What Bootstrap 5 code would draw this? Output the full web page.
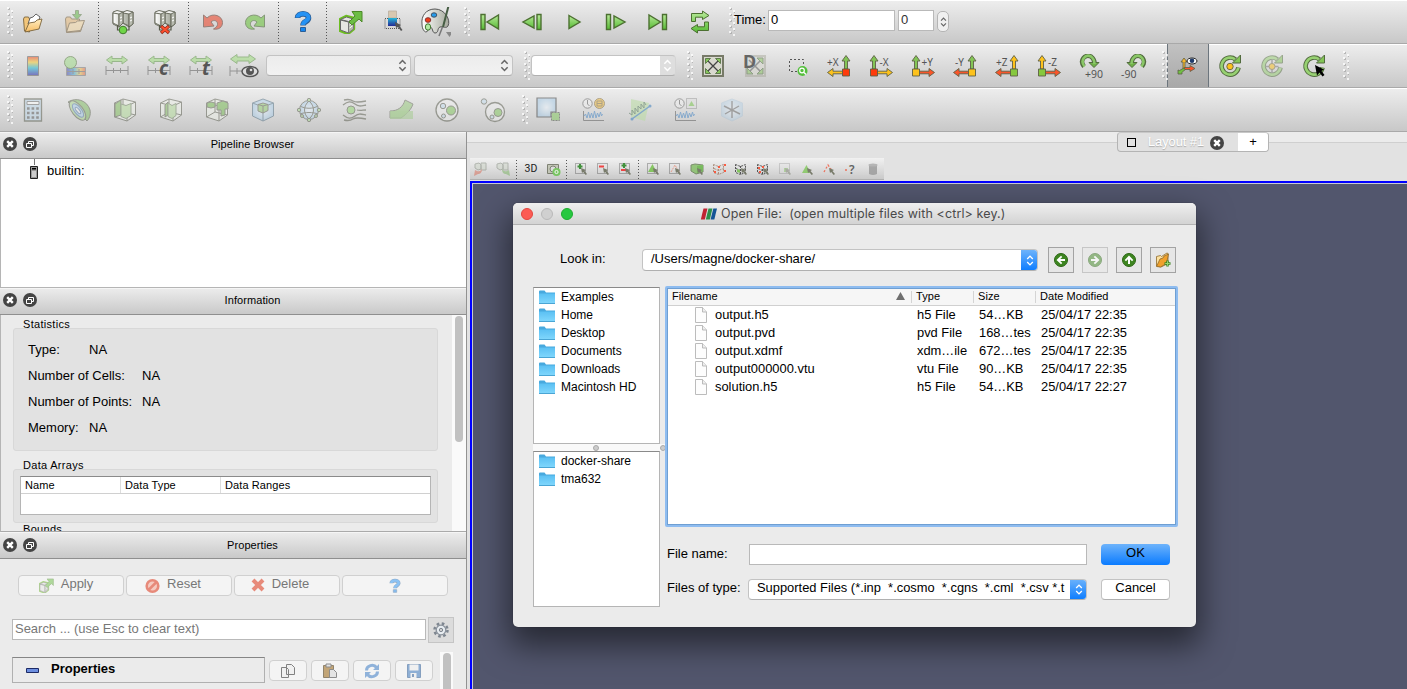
<!DOCTYPE html>
<html lang="en">
<head>
<meta charset="utf-8">
<meta name="viewport" content="width=device-width, initial-scale=1">
<title>ParaView</title>
<link href="https://cdn.jsdelivr.net/npm/bootstrap@5.3.0/dist/css/bootstrap.min.css" rel="stylesheet">
<style>
body{font-family:"Liberation Sans",Arial,sans-serif;font-size:13px;line-height:18px;color:#000;background:#ebebeb;height:689px;overflow:hidden}
svg{display:block;flex:none;overflow:visible}
.tbar{height:44px;background:linear-gradient(#fff 0,#fff 1px,#ededed 1px,#c8c8c8 100%);border-bottom:1px solid #a9a9a9;padding-left:7px}
.tbar .slot{width:42px;height:43px;flex:none;display:flex;align-items:center;justify-content:center;padding-top:1px}
.tbar.wide .slot{width:46px}
.grip{width:6px;height:29px;flex:none;margin-top:-1px;opacity:.75}
.off{opacity:.5}
.vsep{width:6px;flex:none;height:40px;background:repeating-linear-gradient(#555 0,#555 1px,transparent 1px,transparent 3px) 2px 0/1px 100% no-repeat}
.combo{height:21px;border:1px solid #c3c3c3;border-bottom-color:#b0b0b0;border-radius:4px;background:#f1f1f1;display:flex;align-items:center;flex:none}
.combo.gray{background:linear-gradient(#ececec,#f2f2f2)}
.boxin{background:#fff;border:1px solid #b9b9b9;flex:none;height:21px;padding:0 2px;line-height:18px}
.btn-flat{background:#f4f4f4;border:1px solid #d0d0d0;border-radius:4px;height:21px;color:#777;display:flex;align-items:center;justify-content:center;padding:0;font-size:13px;line-height:15px}
.btn-flat span{margin-top:-4px}
.acts .btn-flat{padding-right:4px}
.dock{width:467px;border-right:1px solid #929292;flex:none}
.dtitle{height:27px;background:linear-gradient(#fff 0,#ebebeb 1px,#c9c9c9 100%);border-bottom:1px solid #8f8f8f;font-size:11px;position:relative;flex:none;letter-spacing:.07px;padding-bottom:2px}
.dtitle .ttl{padding-left:39px;width:100%;text-align:center}
.tree{height:129px;background:#fff;border-left:1px solid #b5b5b5;border-bottom:1px solid #b5b5b5;flex:none}
.info{height:217px;border-left:1px solid #b5b5b5;border-bottom:1px solid #aaa;overflow:hidden;flex:none}
.glabel{font-size:11px;line-height:12px;letter-spacing:.3px;padding-left:10px}
.gbox{background:#e2e2e2;border:1px solid #d8d8d8;border-radius:3px}
.srow{height:26px;padding-left:14px;display:flex;align-items:center}
.htab{font-size:11px;letter-spacing:.1px}
.track{width:14px;background:#fafafa;padding:2px 3px 0}
.thumb{width:8px;border-radius:4px;background:#c1c1c1}
.view-tabs{height:26px;background:linear-gradient(#ebebeb 10px,#cfcfcf 10px,#cfcfcf 11px,#e2e2e2 11px)}
.tabpill{margin-left:650px;width:152px;height:20px;border:1px solid #b4b4b4;border-top-color:#c8c8c8;border-radius:4px;background:#e1e1e1;overflow:hidden}
.selbar{width:414px;height:22px;margin-left:3px;background:linear-gradient(#f1f1f1,#cbcbcb);border-bottom:1px solid #b0b0b0}
.selbar .slot{width:22px;flex:none;display:flex;justify-content:center}
.selbar svg{opacity:.8}
.selbar .vsep{height:20px;background-position:2px 1px}
.view{margin-left:3px;margin-top:1px;border-left:2px solid #00f;border-top:2px solid #00f;flex:1;background:#52566d;box-shadow:inset 1px 1px 0 #c8cad2;position:relative}
.dlg{position:absolute;left:41px;top:20px;width:683px;height:424px;background:#ebebeb;border-radius:5px;box-shadow:0 15px 32px 4px rgba(0,0,0,.52),0 0 1px rgba(0,0,0,.6)}
.dlg-h{height:22px;background:linear-gradient(#efefef,#d3d3d3);border-bottom:1px solid #b3b3b3;border-radius:5px 5px 0 0;color:#4a4a4a;position:relative;font-family:Inter,sans-serif}
.light{width:12px;height:12px;border-radius:50%;border:1px solid}
.tool{width:26px;height:26px;border:1px solid #a3a3a3;background:#e6e6e6;padding:0;margin-right:8px;display:flex;align-items:center;justify-content:center;flex:none}
.lst{background:#fff;border:1px solid #b5b5b5;border-top-color:#8a8a8a;height:157px}
.lst>div{height:18px;padding-left:5px;display:flex;align-items:center;gap:6px;font-size:12px;line-height:16px}
.ftab{height:241px;background:#fff;border:2px solid #8ebcf0;box-shadow:inset 0 0 0 1px #6f9fd2;border-radius:2px;padding:1px 1px;margin-left:-1px}
.fr{display:grid;grid-template-columns:243px 62px 62px 1fr;height:18px;line-height:18px;font-size:12.9px}
.fr.h{height:17px;font-size:11px;letter-spacing:.05px;line-height:15px;background:#f6f6f6;border-bottom:1px solid #d0d0d0}
.fr.h span{border-left:1px solid #d4d4d4;padding-left:4px;margin:2px 0;line-height:11px}
.fr>span{padding-left:6px;white-space:nowrap}
.fr .nm{display:flex;gap:8px;padding-left:27px}
.fr .nm svg{margin-top:1px}
.blue{background:linear-gradient(#6db3fb,#0a7bff);width:17px;height:21px;display:flex;align-items:center;justify-content:center}
.ax-x{--u:#83c556;--q:#ff3c0c;--s:#fdc21c}.ax-y{--u:#83c556;--q:#fdc21c;--s:#f9552a}.ax-z{--u:#fdc21c;--q:#86c83e;--s:#f9552a}
svg text{font-family:"Noto Sans","Open Sans",sans-serif}
</style>
</head>
<body class="d-flex flex-column">
<svg width="0" height="0" class="position-absolute" aria-hidden="true"><defs>
<linearGradient id="gr" x2="0" y2="1"><stop stop-color="#b9ea9a"/><stop offset="1" stop-color="#55bb33"/></linearGradient>
<linearGradient id="fo" x2="0" y2="1"><stop stop-color="#ffeec4"/><stop offset="1" stop-color="#f7bd62"/></linearGradient>
<linearGradient id="rb" x2="0" y2="1"><stop stop-color="#ea5a42"/><stop offset=".3" stop-color="#f4cf4c"/><stop offset=".6" stop-color="#3fc0d8"/><stop offset="1" stop-color="#4a3fb0"/></linearGradient>
<linearGradient id="rbh"><stop stop-color="#4a3fb0"/><stop offset=".4" stop-color="#3fb0e0"/><stop offset=".7" stop-color="#f4cf4c"/><stop offset="1" stop-color="#ea5a42"/></linearGradient>
<linearGradient id="cm" x2="0" y2="1"><stop stop-color="#25b6d8"/><stop offset="1" stop-color="#232a95"/></linearGradient>
<linearGradient id="qb" x2="0" y2="1"><stop stop-color="#5cc0ff"/><stop offset="1" stop-color="#0d6fe0"/></linearGradient>
<linearGradient id="sv"><stop stop-color="#fff"/><stop offset="1" stop-color="#a5a99c"/></linearGradient>
<linearGradient id="fold" x2="0" y2="1"><stop stop-color="#5bc0f3"/><stop offset="1" stop-color="#7fd6fc"/></linearGradient>
<radialGradient id="bl"><stop stop-color="#eef6ff"/><stop offset="1" stop-color="#a5cbe8"/></radialGradient>
<symbol id="grip" viewBox="0 0 6 29"><g fill="#a9a9a9"><path d="M1 1h2v2H1zM1 7h2v2H1zM1 13h2v2H1zM1 19h2v2H1zM1 25h2v2H1zM5 4h2v2H5zM5 10h2v2H5zM5 16h2v2H5zM5 22h2v2H5zM5 28h2v2H5z"/></g><path fill="#fff" d="M0 0h2v2H0zM0 6h2v2H0zM0 12h2v2H0zM0 18h2v2H0zM0 24h2v2H0zM4 3h2v2H4zM4 9h2v2H4zM4 15h2v2H4zM4 21h2v2H4zM4 27h2v2H4z"/></symbol>
<symbol id="open" viewBox="0 0 24 24"><g stroke="#7b643c" stroke-linejoin="round" stroke-width=".9"><path fill="#f3c67a" d="M2.500 9l1-2h4l1 2v13l-5-1z"/><path fill="#fff" stroke="#555" d="M7 14l2-6 3-1 3-3 4 3-2 5z"/><path fill="url(#fo)" d="M4 22l4-9 6-1 2-2 5-1-3 10z"/></g></symbol>
<symbol id="save" viewBox="0 0 24 24"><path fill="#e9b872" stroke="#6b5430" d="M2.500 9l1-2h4l1 2h8v4l4-.5-3 9-14 1z"/><path fill="#fbdca4" stroke="#6b5430" d="M3.500 22l3-9 6-.5 2-1.500 7-.5-4 10z"/><path fill="#58b43a" stroke="#5a7a44" d="M12.500.5h3v4h3l-4.500 5-4.500-5h3z"/></symbol>
<symbol id="srv" viewBox="0 0 24 24"><g stroke="#6a6d5f" stroke-width="1" stroke-linejoin="round"><path fill="#f4f4f2" d="M2 2l4-1.500L12 2v11l-4 4-6-3zM12 2l4-1.500L22 2v12l-4 3-6-4z"/><path fill="url(#sv)" d="M2 3l6 1v12l-6-3zM12 3l6 1v12l-6-3z"/><path fill="#b8bbb0" d="M8 4l4-2v11l-4 4zM18 4l4-2v12l-4 3z"/></g><path stroke="#fff" d="M9 8l2-1M9 11l2-1M19 8l2-1M19 11l2-1"/><path fill="none" stroke="#56594a" stroke-width="1.200" d="M6.500 15v5H9m6 0h3v-4"/></symbol>
<symbol id="undo" viewBox="0 0 24 24"><path fill="#e8604a" stroke="#7b5a50" d="M2.500 5v12l10.500-1-3-4c3-3 7-1 6.500 2.500-.2 2-1.500 3-4 4.500 5.500 1 9-2 9-6.500C21.500 6 12 2 6 8z"/></symbol>
<symbol id="redo" viewBox="0 0 24 24"><path fill="#80c75a" stroke="#617a50" d="M21.500 5v12l-10.500-1 3-4c-3-3-7-1-6.500 2.500.2 2 1.500 3 4 4.500-5.500 1-9-2-9-6.500C2.500 6 12 2 18 8z"/></symbol>
<symbol id="help" viewBox="0 0 24 24"><path fill="none" stroke="#2c5f96" stroke-width="5.600" d="M6.500 8c0-5.500 11-5.500 11 0 0 4-5.500 3-5.500 7.500"/><path fill="none" stroke="#2592f4" stroke-width="4" d="M6.500 7.500c0-5 11-5 11 0 0 4-5.500 3-5.500 7.500"/><path fill="#1686ee" stroke="#2c5f96" d="M9.500 17.500h5v4h-5z"/></symbol>
<symbol id="cubearrow" viewBox="0 0 24 24"><path fill="#eee" stroke="#6cbd21" stroke-width="2.400" stroke-linejoin="round" d="M1 9l6-3 8 2v11l-6 5-8-3z"/><path fill="#e6e6e2" stroke="#666" d="M1.500 9.500l6-2.500 7 2-5 2.500zM9.500 12v11l-8-3V10z"/><path fill="#b4b7ac" stroke="#777" d="M9.500 11.500l5-2.500v10l-5 4z"/><path stroke="#fff" d="M10.500 15l3-2m-3 5l3-2"/><path fill="#6cbd45" stroke="#4c8828" d="M13 1.500h10V12l-3-3-7 6-3-3 6-6z"/></symbol>
<symbol id="cmapsel" viewBox="0 0 24 24"><path fill="#d8c8b0" stroke="#b9ad9f" stroke-width=".8" d="M7.500 1h8v7h-8z"/><path fill="none" stroke="#555" stroke-dasharray="1 1" d="M4 8.500h15v10H4z"/><path fill="url(#cm)" d="M7 8h9v8H7z"/><path fill="#555" d="M14 12l6 3-1.500 1 3 4-1.500 1-3-4-2 1z"/></symbol>
<symbol id="palette" viewBox="0 0 30 30"><path fill="url(#sv)" stroke="#555" d="M14 2C5 2 0 9 1 17c0 6 3 8 4 8 3 0 1-5 4-5s2 6 5 6c4 0 2-5 5-6s6 2 8-1c3-6-3-17-13-17z"/><ellipse cx="13" cy="8" rx="2.800" ry="2.200" fill="#259bea" stroke="#456"/><ellipse cx="7" cy="13" rx="2.800" ry="2.300" fill="#f13c17" stroke="#833"/><ellipse cx="7" cy="20" rx="2.700" ry="3.200" fill="#b4eaa4" stroke="#473"/><path stroke="#465d43" stroke-width="2" d="M27.500 -1L22 20"/><path stroke="#777" stroke-width="1.500" d="M21.500 20L18 29"/><path fill="#888" d="M25 25h7l-3.500 5z"/></symbol>
<symbol id="rng" viewBox="0 0 24 24"><path fill="#97dc74" stroke="#55913b" d="M1.500 6L7 2v2.500h10V2l5.500 4L17 10V7.500H7V10z"/><path fill="none" stroke="#555" d="M1 12v9M23 12v9M1 16.500h22M8.500 14v5M15.500 14v5"/></symbol>
<symbol id="ud" viewBox="0 0 10 14"><path fill="none" stroke-width="1.700" d="M1.500 5L5 1.500 8.500 5M1.500 9L5 12.500 8.500 9"/></symbol>
<symbol id="cube" viewBox="0 0 24 24"><path fill="#eef2e9" stroke="#56594a" stroke-linejoin="round" d="M1.500 5L10 1l12.500 3v13L14 23 1.500 19z"/><path fill="none" stroke="#56594a" d="M1.500 5L14 8l8.500-4M14 8v15M10 1v13l12.500 3M10 14l-8.500 5"/></symbol>
<symbol id="ax" viewBox="0 0 24 24"><g stroke="#5e6045" stroke-width=".9"><path fill="var(--s)" d="M23.500 18.500L18 14.500v2.700H8v2.600h10v2.700z"/><path fill="var(--u)" d="M5 1.500L9 7H6.500v8h-3V7H1z"/><path fill="var(--q)" d="M1.500 15h7v7h-7z"/></g></symbol>
<symbol id="rot" viewBox="0 0 24 24"><path fill="none" stroke="#526b3e" stroke-width="4.600" d="M17.500 5.500a8.500 8.500 0 1 0 3 8"/><path fill="#83c556" stroke="#526b3e" d="M14.500 9h8V1z"/><path fill="none" stroke="#97d172" stroke-width="2.600" d="M17 5.200a8.500 8.500 0 1 0 3.400 8.600"/></symbol>
<symbol id="rot9" viewBox="0 0 24 24"><path fill="none" stroke="#526b3e" stroke-width="4.400" d="M5 12.500c-5-6 1-13 7-10 2 1.500 3.500 3 3.500 6.500"/><path fill="#70b248" stroke="#526b3e" d="M10 8.500h10l-5 5z"/><path fill="none" stroke="#8ac767" stroke-width="2.600" d="M5.500 12.500c-5-6 1-13 6.500-10 2 1.500 3.500 3 3.500 7.500"/></symbol>
<symbol id="wave" viewBox="0 0 24 24"><path fill="none" stroke="#555" d="M1.500 13v9.500H22"/><path fill="none" stroke="#3a80c5" d="M2 18l1.500-2 1.500 4 1.500-6 1.500 6 1.500-5 1.500 5 1.500-7 1.500 7 1.500-5 1.500 4 1.500-5 1 4 1-2"/></symbol>
<symbol id="clk" viewBox="0 0 24 24"><circle cx="5.500" cy="5.500" r="4.700" fill="#eee" stroke="#555"/><path fill="none" stroke="#555" d="M5.500 2v4l2 2"/></symbol>
<symbol id="dx" viewBox="0 0 14 14"><circle cx="7" cy="7" r="7" fill="#444"/><path stroke="#fff" stroke-width="2.400" d="M4.200 4.200l5.600 5.600m0-5.600L4.200 9.800"/></symbol>
<symbol id="df" viewBox="0 0 14 14"><circle cx="7" cy="7" r="7" fill="#444"/><path fill="none" stroke="#fff" d="M3.500 6.500h5v4h-5zM5.500 6V4.500h5v4H9"/></symbol>
<symbol id="selbox" viewBox="0 0 16 16"><path fill="none" stroke="#555" stroke-dasharray="1 1" d="M2.500 2.500h10v10h-10z"/></symbol>
<symbol id="cur" viewBox="0 0 16 16"><path fill="#60644f" d="M8 7l5 2-1.500 1 2.500 3-1.300 1-2.500-3-1.200 1z"/></symbol>
<symbol id="net" viewBox="0 0 16 16"><path fill="none" d="M2.500 3.500l5 2 5-2v8l-5 2-5-2zM7.500 5v8M3 7.500l4.500 2 5-2" stroke-dasharray="2 1"/></symbol>
<symbol id="lnk" viewBox="0 0 16 16"><path fill="#c7d1c0" stroke="#667060" d="M2 3l4-1 2 2v4L5 9 2 7zM8 2h5v7H8z"/></symbol>
<symbol id="folder" viewBox="0 0 16 14"><path fill="#48a9de" d="M0 1.500Q0 .5 1 .5h4.500l1.500 2h9V13H0z"/><path fill="url(#fold)" d="M0 3.500h16V13H0z"/><path fill="#4aa5d4" d="M0 13h16v1H0z"/></symbol>
<symbol id="doc" viewBox="0 0 12 16"><path fill="#fdfdfd" stroke="#b4b4b4" stroke-width=".9" d="M.5.5h7l4 4.500v10.500H.5z"/><path fill="#eee" stroke="#b4b4b4" stroke-width=".9" d="M7.500.5V5h4"/></symbol>
<symbol id="arw" viewBox="0 0 16 16"><circle cx="8" cy="8" r="6.500" fill="#3d8520" stroke="#2c6614"/><path fill="#fff" d="M3.500 8L8 3.700l1.300 1.300L7.200 7H12v2H7.200l2.100 2L8 12.300z"/></symbol>
<symbol id="ball" viewBox="0 0 24 24"><path fill="none" stroke="#56594a" d="M3 8c5 3 13 3 18 0M3 16c5-2 13-2 18 0M12 3c-6 5-6 13 0 18M12 3c6 5 6 13 0 18"/><circle cx="12" cy="12" r="9.500" fill="none" stroke="#56594a"/><g fill="#a3d68b" stroke="#56594a"><circle cx="12" cy="2" r="1.700"/><circle cx="12" cy="22" r="1.700"/><circle cx="2" cy="12" r="1.700"/><circle cx="22" cy="12" r="1.700"/><circle cx="5" cy="18" r="1.500"/><circle cx="19" cy="18" r="1.500"/></g></symbol>
</defs></svg>

<!-- main toolbar -->
<div class="tbar d-flex align-items-center">
<svg class="grip" style="margin-right:-1px"><use href="#grip"/></svg>
<div class="slot"><svg width="24" height="24"><use href="#open"/></svg></div>
<div class="slot off"><svg width="24" height="24"><use href="#save"/></svg></div>
<div class="vsep"></div>
<div class="slot"><svg width="24" height="24"><use href="#srv"/><circle cx="12" cy="20" r="3.800" fill="#6fd548" stroke="#417b2b"/></svg></div>
<div class="slot"><svg width="24" height="24"><use href="#srv"/><path stroke="#8c2c1c" stroke-width="3.400" d="M8 16l8 7m0-7l-8 7"/><path stroke="#ff4f2e" stroke-width="2" d="M8.500 16.500l7 6m0-6l-7 6"/></svg></div>
<div class="vsep"></div>
<div class="slot" style="opacity:.7"><svg width="24" height="24"><use href="#undo"/></svg></div>
<div class="slot" style="opacity:.7"><svg width="24" height="24"><use href="#redo"/></svg></div>
<div class="vsep"></div>
<div class="slot"><svg width="24" height="24"><use href="#help"/></svg></div>
<div class="vsep"></div>
<div class="slot"><svg width="24" height="24"><use href="#cubearrow"/></svg></div>
<div class="slot"><svg width="24" height="24"><use href="#cmapsel"/></svg></div>
<div class="slot" style="width:44px"><svg width="30" height="30"><use href="#palette"/></svg></div>
<svg class="grip" style="margin:0 -1px 0 6px"><use href="#grip"/></svg>
<div class="slot"><svg width="24" height="24" fill="url(#gr)" stroke="#4c7031" stroke-width="1.400"><path d="M3 4.500h4v15H3zM20.500 5v14L9 12z"/></svg></div>
<div class="slot"><svg width="24" height="24" fill="url(#gr)" stroke="#4c7031" stroke-width="1.400"><path d="M17 4.500h4v15h-4zM14 6v12L3 12z"/></svg></div>
<div class="slot"><svg width="24" height="24" fill="url(#gr)" stroke="#4c7031" stroke-width="1.400"><path d="M7 5.500l11 6.500-11 6.500z"/></svg></div>
<div class="slot"><svg width="24" height="24" fill="url(#gr)" stroke="#4c7031" stroke-width="1.400"><path d="M2.500 4.500h4v15h-4zM10 6v12l11-6z"/></svg></div>
<div class="slot"><svg width="24" height="24" fill="url(#gr)" stroke="#4c7031" stroke-width="1.400"><path d="M16.500 4.500h4v15h-4zM3 5v14l11.500-7z"/></svg></div>
<div class="slot"><svg width="24" height="24" fill="url(#gr)" stroke="#4c7031"><path d="M3.500 11.500v-8h11V1l6.500 4.500-6.500 4V7.200H7.500v4.300zM20.500 12v8.500h-11V23L3 18.500l6.500-4v2.300h7V12z"/></svg></div>
<svg class="grip" style="margin:0 1px 0 8px"><use href="#grip"/></svg>
<span style="width:34px;margin:-3px 0 0 -2px;font-size:13px;letter-spacing:-.05px">Time:</span>
<div class="boxin" style="width:127px;margin:-3px 3px 0 0">0</div>
<div class="boxin" style="width:36px;margin:-2px 3px 0 0;color:#333">0</div>
<div class="d-flex align-items-center justify-content-center" style="width:12px;height:21px;border:1px solid #b5b5b5;border-radius:5px;background:#f0f0f0"><svg width="7" height="14" stroke="#666"><use href="#ud"/></svg></div>
</div>

<!-- colouring and camera toolbar -->
<div class="tbar d-flex align-items-center">
<svg class="grip" style="margin-right:-1px"><use href="#grip"/></svg>
<div class="slot" style="opacity:.65"><svg width="24" height="24"><path fill="url(#rb)" stroke="#777" d="M6.500 2.500h11v19h-11z"/></svg></div>
<div class="slot off"><svg width="24" height="24"><path fill="url(#rbh)" stroke="#777" d="M3.500 13.500h19v8h-19z"/><path stroke="#666" fill="none" d="M4 17.500h18M10 15v5M16 15v5"/><circle cx="7.500" cy="8.500" r="6" fill="#9cdc84" stroke="#4c7031"/></svg></div>
<div class="slot off"><svg width="24" height="24"><use href="#rng"/></svg></div>
<div class="slot"><svg width="24" height="24"><g class="off"><use href="#rng"/></g><text x="12" y="21" font-size="19" font-weight="700" font-style="italic" fill="#555">c</text></svg></div>
<div class="slot"><svg width="24" height="24"><g class="off"><use href="#rng"/></g><text x="13" y="21" font-size="19" font-weight="700" font-style="italic" fill="#555">t</text></svg></div>
<div class="slot" style="width:44px"><svg width="30" height="24"><g class="off"><path fill="#97dc74" stroke="#55913b" d="M1.500 5L8 .5V3h12V.5L26.500 5 20 9.500V7H8v2.500z"/><path stroke="#555" fill="none" d="M1 12v10M1 17h12M8 14v6"/></g><ellipse cx="21" cy="17.500" rx="8" ry="5" fill="#ddd" stroke="#555" stroke-width="1.500"/><circle cx="21" cy="17" r="4" fill="#555"/><circle cx="22" cy="16" r="1.300" fill="#ddd"/></svg></div>
<div class="combo gray justify-content-end" style="width:145px;margin-right:3px;padding-right:3px"><svg width="9" height="13" stroke="#666"><use href="#ud"/></svg></div>
<div class="combo gray justify-content-end" style="width:99px;margin-right:11px;padding-right:3px"><svg width="9" height="13" stroke="#666"><use href="#ud"/></svg></div>
<svg class="grip" style="margin-right:1px"><use href="#grip"/></svg>
<div class="combo overflow-hidden" style="width:145px;margin-right:11px;border-right-color:#d5d5d5;background:linear-gradient(90deg,#fff 128px,#dedede 128px)"><svg width="9" height="13" stroke="#fff" style="margin-left:131px"><use href="#ud"/></svg></div>
<svg class="grip" style="margin-right:-1px"><use href="#grip"/></svg>
<div class="slot"><svg width="24" height="24"><path fill="#d9d9cf" stroke="#777a68" stroke-width="2" d="M2 2h20v20H2z"/><path stroke="#444" stroke-width="1.300" d="M6 6l12 12M18 6L6 18"/><path fill="#86c65b" stroke="#4b663b" stroke-width=".8" d="M4.500 4.500h5l-5 5zM19.500 4.500v5l-5-5zM4.500 19.500v-5l5 5zM19.500 19.500h-5l5-5z"/></svg></div>
<div class="slot"><svg width="24" height="24"><g class="off"><path fill="#d9d9cf" stroke="#a9a99c" stroke-width="2" d="M3 2h19v20H3z"/><path stroke="#555" stroke-width="1.500" d="M6 6l12 12M18 6L6 18"/><path fill="#86c65b" stroke="#4b663b" d="M20 4v6l-6-6zM4 20v-6l6 6zM20 20h-6l6-6z"/></g><text x="0" y="14" font-size="18" font-weight="700" fill="#666">D</text></svg></div>
<div class="slot"><svg width="24" height="24"><path fill="none" stroke="#555" stroke-dasharray="2 2" d="M12 17.500H4.500v-12h14V12"/><circle cx="17.500" cy="17" r="5" fill="#54bf3c"/><circle cx="17" cy="16.500" r="2.300" fill="none" stroke="#fff" stroke-width="1.200"/><path stroke="#fff" stroke-width="1.500" d="M19 18.500l2 2"/></svg></div>
<div class="slot ax-x"><svg width="24" height="24"><g transform="matrix(-1 0 0 1 24 0)"><use href="#ax" width="24" height="24"/></g><text x="0" y="12" font-size="10" fill="#555">+X</text></svg></div>
<div class="slot ax-x"><svg width="24" height="24"><use href="#ax"/><text x="10.500" y="12" font-size="10" fill="#555">-X</text></svg></div>
<div class="slot ax-y"><svg width="24" height="24"><use href="#ax"/><text x="10.500" y="12" font-size="10" fill="#555">+Y</text></svg></div>
<div class="slot ax-y"><svg width="24" height="24"><g transform="matrix(-1 0 0 1 24 0)"><use href="#ax" width="24" height="24"/></g><text x="2" y="12" font-size="10" fill="#555">-Y</text></svg></div>
<div class="slot ax-z"><svg width="24" height="24"><g transform="matrix(-1 0 0 1 24 0)"><use href="#ax" width="24" height="24"/></g><text x="1" y="12" font-size="10" fill="#555">+Z</text></svg></div>
<div class="slot ax-z"><svg width="24" height="24"><use href="#ax"/><text x="11" y="12" font-size="10" fill="#555">-Z</text></svg></div>
<div class="slot"><svg width="24" height="24"><use href="#rot9"/><text x="6" y="24" font-size="10.500" fill="#555">+90</text></svg></div>
<div class="slot"><svg width="24" height="24"><g transform="matrix(-1 0 0 1 26 0)"><use href="#rot9" width="24" height="24"/></g><text x="0" y="24" font-size="10.500" fill="#555">-90</text></svg></div>
<svg class="grip" style="margin:0 -1px 0 8px"><use href="#grip"/></svg>
<div class="slot border-start border-end border-secondary" style="background:linear-gradient(#c2c2c2,#a8a8a8)"><svg width="24" height="24"><g stroke="#5e6045" stroke-width=".8"><path fill="#f7b82d" d="M8 4l3 4H9v8H7V8H5z"/><path fill="#f9552a" d="M19 14.500l-5-3v2H8v2h6v2z"/><path fill="#70c043" d="M8 14l1 1.500-3 3V20H2v-4l1.500.5z"/></g><ellipse cx="16" cy="7" rx="5" ry="3" fill="#fff" stroke="#222"/><circle cx="16" cy="6.800" r="2.300" fill="#203c6c"/></svg></div>
<div class="slot"><svg width="24" height="24"><use href="#rot"/><circle cx="12" cy="12.500" r="3.200" fill="#fdc21c" stroke="#746c44"/></svg></div>
<div class="slot off"><svg width="24" height="24"><use href="#rot"/><path stroke="#777" stroke-width="1.500" d="M12 6v13M5.500 12.500h13"/><circle cx="12" cy="12.500" r="3" fill="#fdc21c" stroke="#746c44"/></svg></div>
<div class="slot"><svg width="24" height="24"><use href="#rot"/><path d="M13 11l9 4.500-2.500 1.500 3 4-2 1.500-3-4-2.500 3z"/></svg></div>
<svg class="grip" style="margin-left:8px"><use href="#grip"/></svg>
</div>

<!-- filter toolbar -->
<div class="tbar wide d-flex align-items-center">
<svg class="grip" style="margin-right:-3px"><use href="#grip"/></svg>
<div class="slot off"><svg width="24" height="24"><path fill="#bcd7ea" stroke="#56594a" stroke-width="1.300" d="M3.500 1h17v22h-17z"/><path fill="#fff" stroke="#666" d="M6 3.500h12v3H6z"/><path stroke="#555" stroke-width="2.600" stroke-dasharray="2.600 2" fill="none" d="M6 10.500h12.500M6 15h12.500M6 19.500h12.500"/></svg></div>
<div class="slot off"><svg width="24" height="24"><path fill="#7dbb5f" stroke="#56594a" d="M1 4c8-5 19-2 22 8 1 5-1 9-3 11z"/><ellipse cx="10.500" cy="12.500" rx="5.500" ry="11.500" transform="rotate(-38 10.500 12.500)" fill="#a9d58c" stroke="#56594a"/><ellipse cx="11" cy="12.500" rx="3.500" ry="8" transform="rotate(-38 11 12.500)" fill="#a5cbe8" stroke="#4f77a5"/><ellipse cx="11" cy="12.500" rx="1.500" ry="4" transform="rotate(-38 11 12.500)" fill="#eee" stroke="#4f77a5"/></svg></div>
<div class="slot off"><svg width="24" height="24"><use href="#cube"/><path fill="#7dbd58" stroke="#56594a" d="M2 6l6-4v15l-6 2z"/><path fill="#b3dd98" stroke="#6d805f" d="M8 6l5 1.500 5-2v12l-5 3-5-2z"/></svg></div>
<div class="slot off"><svg width="24" height="24"><use href="#cube"/><path fill="#7dbd58" stroke="#56594a" d="M6 7l3-3v13l-3 2z"/><path fill="#b3dd98" stroke="#6d805f" d="M9 5l4 2.500 4-2v12l-4 3-4-2z"/></svg></div>
<div class="slot off"><svg width="24" height="24"><use href="#cube"/><path fill="#70b74b" stroke="#56594a" d="M2 5l4-1 4 1v4L6 10 2 9zM12 5l6-2 5 2v6h-3v6l-4 1v-6h-4z"/></svg></div>
<div class="slot off"><svg width="24" height="24"><path fill="url(#bl)" stroke="#4f6d80" d="M1.500 5L12 1l10.500 4v13L12 23 1.500 18z"/><path fill="none" stroke="#4f6d80" d="M1.500 5L12 9l10.500-4M12 9v14"/><path fill="#8dcb6a" stroke="#56594a" d="M7 6.500L12 5l5 1.500v6L12 15l-5-2z"/><path fill="none" stroke="#56594a" d="M7 6.500l5 1.500 5-1.500M12 8v7"/></svg></div>
<div class="slot off"><svg width="24" height="24"><circle cx="12" cy="12" r="9.500" fill="url(#bl)"/><use href="#ball"/></svg></div>
<div class="slot off"><svg width="24" height="24"><path fill="none" stroke="#56594a" stroke-width="1.300" d="M1 2c4-1 6-1 9 1s8 1 13 0M0 7c5-4 8-4 12-1s6 2 11 1M14 12c3 1 6 0 9 0M0 17c5 4 8 4 12 1s6-2 11-1M1 22c4 1 6 1 9-1s8-1 13 0"/><circle cx="8" cy="12" r="4" fill="#8ed56c" stroke="#56594a"/></svg></div>
<div class="slot off"><svg width="24" height="24"><path fill="#8cc76c" stroke="#56594a" d="M1 13c8 0 13-4 15-11l8 4c-2 6-6 9-8 11l-4 3H1z" opacity=".9"/><path fill="#8cc76c" opacity=".7" d="M1 13h23v8H1z"/></svg></div>
<div class="slot off"><svg width="24" height="24"><circle cx="12" cy="12" r="11" fill="#eee" stroke="#56594a" stroke-width="1.300"/><circle cx="16" cy="12.500" r="4.500" fill="#80c75a" stroke="#56594a"/><circle cx="8" cy="8" r="2.700" fill="#c3ddef" stroke="#56594a"/><circle cx="8.500" cy="18" r="2" fill="#c3ddef" stroke="#56594a"/></svg></div>
<div class="slot off"><svg width="24" height="24"><circle cx="14" cy="14" r="9.500" fill="#eee" stroke="#56594a" stroke-width="1.300"/><circle cx="17" cy="14.500" r="4" fill="#80c75a" stroke="#56594a"/><circle cx="3" cy="3.500" r="2.700" fill="#c3ddef" stroke="#56594a"/><circle cx="11" cy="19" r="2" fill="#c3ddef" stroke="#56594a"/></svg></div>
<svg class="grip" style="margin:0 -3px 0 6px"><use href="#grip"/></svg>
<div class="slot off"><svg width="26" height="24"><path fill="url(#bl)" stroke="#333" stroke-width="1.200" d="M2 0h19v14h-5v5H2z"/><path fill="#80c75a" stroke="#444" stroke-dasharray="2 1" d="M16.500 14.500h8v8h-8z"/></svg></div>
<div class="slot off"><svg width="24" height="24"><use href="#clk"/><circle cx="17.500" cy="5.500" r="5" fill="#f5b92b" stroke="#7b6330"/><path fill="none" stroke="#7b6330" d="M15 3h5v5h-5zM15 5.500h5"/><use href="#wave"/></svg></div>
<div class="slot off"><svg width="24" height="24"><path fill="#b7dd9e" d="M3 1l18 4-4 18-14-4z"/><path stroke="#2d77bd" stroke-width="1.500" d="M4 21L22 8"/><circle cx="4" cy="21" r="1.500" fill="#2d77bd"/><circle cx="22" cy="8" r="1.500" fill="#2d77bd"/><path fill="none" stroke="#456b50" d="M1 15l3 2 0-5 3 4 0-6 3 4 0-6 3 3 0-5 3 4 0-6 2 3"/></svg></div>
<div class="slot off"><svg width="24" height="24"><use href="#clk"/><path fill="#ddd" stroke="#555" stroke-dasharray="1 1" d="M12.500.5h10v10h-10z"/><path fill="#70c043" d="M14.500 8l3-5 3 5z"/><use href="#wave"/></svg></div>
<div class="slot" style="opacity:.35"><svg width="24" height="24"><path fill="url(#bl)" stroke="#9fbfd8" d="M1.500 5L12 1l10.500 4v13L12 23 1.500 18z"/><path stroke="#333" stroke-width="1.400" d="M12 3v17M4 8l16 8M19 8L5 16"/></svg></div>
</div>

<div class="d-flex flex-grow-1">
<!-- left docks -->
<div class="dock d-flex flex-column">
<div class="dtitle d-flex align-items-center"><span class="d-flex position-absolute" style="left:3px;column-gap:6px"><svg width="14" height="14"><use href="#dx"/></svg><svg width="14" height="14"><use href="#df"/></svg></span><span class="ttl">Pipeline Browser</span></div>
<div class="tree d-flex"><svg width="8" height="22" style="margin-left:29px"><path stroke="#777" d="M4.500 0v6"/><path fill="#999" stroke="#222" d="M.5 7.500h7v12h-7z"/><path fill="#000" d="M2 9h4v1.500H2z"/><path fill="#ccc" d="M2 12h4v6H2z"/></svg><span style="margin:3px 0 0 9px">builtin:</span></div>
<div class="dtitle d-flex align-items-center"><span class="d-flex position-absolute" style="left:3px;column-gap:6px"><svg width="14" height="14"><use href="#dx"/></svg><svg width="14" height="14"><use href="#df"/></svg></span><span class="ttl">Information</span></div>
<div class="info d-flex">
<div style="width:426px;margin-left:11px;padding:3px 0 0 1px">
<div class="glabel" style="height:10px">Statistics</div>
<div class="gbox" style="height:123px;padding-top:8px">
<div class="srow"><span style="width:61px">Type:</span>NA</div>
<div class="srow"><span style="width:114px">Number of Cells:</span>NA</div>
<div class="srow"><span style="width:114px">Number of Points:</span>NA</div>
<div class="srow"><span style="width:61px">Memory:</span>NA</div>
</div>
<div class="glabel" style="margin-top:8px;height:10px">Data Arrays</div>
<div class="gbox" style="height:54px;padding:6px"><div class="htab bg-white" style="height:39px;border:1px solid #b5b5b5;border-top-color:#8a8a8a"><div class="d-flex" style="height:17px;line-height:16px;border-bottom:1px solid #d0d0d0"><span style="width:100px;padding-left:4px">Name</span><span style="width:100px;padding-left:4px;border-left:1px solid #ddd;margin-left:-1px">Data Type</span><span style="padding-left:4px;border-left:1px solid #ddd">Data Ranges</span></div></div></div>
<div class="glabel">Bounds</div>
</div>
<div class="track ms-auto" style="padding-top:1px"><div class="thumb" style="height:126px"></div></div>
</div>
<div class="dtitle d-flex align-items-center" style="padding-bottom:0"><span class="d-flex position-absolute" style="left:3px;column-gap:6px"><svg width="14" height="14"><use href="#dx"/></svg><svg width="14" height="14"><use href="#df"/></svg></span><span class="ttl">Properties</span></div>
<div class="d-flex acts" style="margin:16px 0 0 18px;gap:2px">
<button class="btn-flat" style="width:106px;gap:7px;padding-right:10px"><svg width="15" height="15" class="off"><use href="#cubearrow"/></svg><span>Apply</span></button>
<button class="btn-flat" style="width:106px;gap:7px;padding-right:12px"><svg width="15" height="15" style="opacity:.6"><circle cx="7.500" cy="8" r="5.800" fill="#f6b0a0" stroke="#e0442a" stroke-width="2.600"/><path stroke="#e0442a" stroke-width="2.500" d="M3.500 12l8-8"/></svg><span>Reset</span></button>
<button class="btn-flat" style="width:106px;gap:7px;padding-right:14px"><svg width="14" height="14" style="opacity:.6;margin-top:-3px"><path stroke="#e0442a" stroke-width="4" d="M2 3l10 10M12 3L2 13"/></svg><span>Delete</span></button>
<button class="btn-flat p-0" style="width:106px"><svg width="16" height="16" class="off"><use href="#help"/></svg></button>
</div>
<div class="d-flex align-items-center" style="margin:21px 0 0 12px;gap:2px"><div class="boxin" style="width:414px;color:#777;line-height:17px;margin-top:-1px;letter-spacing:-.02px">Search ... (use Esc to clear text)</div><div class="d-flex align-items-center justify-content-center" style="width:26px;height:26px;border:1px solid #c5c5c5;background:#dcdcdc"><svg width="16" height="16"><circle cx="8" cy="8" r="6.500" fill="none" stroke="#7e8690" stroke-width="2.500" stroke-dasharray="2.600 2.500"/><circle cx="8" cy="8" r="4.800" fill="#e8edf1" stroke="#8a929c" stroke-width="1.300"/><circle cx="8" cy="8" r="1.700" fill="#ccc" stroke="#7e8690"/></svg></div></div>
<div class="d-flex" style="margin:9px 0 0 12px;height:37px">
<div class="d-flex align-items-center" style="width:253px;height:26px;margin-top:5px;border:1px solid #b0b0b0;border-top-color:#858585;padding-left:13px"><svg width="13" height="5"><path fill="#6d8fe0" stroke="#1c2a66" d="M.5.5h12v4H.5z"/></svg><b style="margin:-3px 0 0 12px">Properties</b></div>
<div class="d-flex" style="margin:8px 0 0 4px;gap:4px">
<button class="btn-flat" style="width:38px"><svg width="16" height="16" opacity=".65"><path fill="#eee" stroke="#444" d="M6.500 1.500h5l3 3v7h-8zM1.500 4.500h5l2 2v8h-7z"/></svg></button>
<button class="btn-flat" style="width:38px"><svg width="16" height="16" opacity=".65"><path fill="#a87c35" stroke="#5c4824" d="M1.500 2.500h10v12h-10z"/><path fill="#ddd" stroke="#555" d="M4 1h5v3H4zM7.500 6.500h4l3 3v5h-7z"/></svg></button>
<button class="btn-flat" style="width:38px"><svg width="16" height="16" fill="none" stroke="#8fb2da" stroke-width="3"><path d="M2.500 7.500c0-5 7-7 10-3M13.500 8.500c0 5-7 7-10 3"/><path fill="#8fb2da" stroke="none" d="M15 1v6H9zM1 15V9h6z"/></svg></button>
<button class="btn-flat" style="width:38px"><svg width="16" height="16" opacity=".55"><path fill="#3c77bd" stroke="#2b5b94" d="M1.500 1.500h13v13h-13z"/><path fill="#eee" d="M3.500 1.500h9v6h-9zM4.500 10h6v5h-6z"/><path fill="#2b5b94" d="M6 11h2v3H6z"/></svg></button>
</div>
<div class="track" style="margin-left:7px;padding-top:1px;width:13px"><div class="thumb" style="height:40px"></div></div>
</div>
</div>

<!-- render area -->
<div class="d-flex flex-column flex-grow-1" style="background:#e2e2e2">
<div class="view-tabs"><div class="tabpill d-flex align-items-center"><span style="width:9px;height:9px;border:1.500px solid #000;margin-left:9px"></span><span class="text-white" style="margin:-1px 0 0 12px;font-size:12.800px;letter-spacing:-.02px;text-shadow:0 1px 1px #aaa">Layout #1</span><svg width="14" height="14" style="margin:1px 14px 0 auto"><use href="#dx"/></svg><span class="bg-white text-center" style="width:30px;height:20px;line-height:20px">+</span></div></div>
<div class="selbar d-flex align-items-center">
<div class="slot off"><svg width="16" height="16"><use href="#lnk"/><path fill="#d84e35" d="M1 15l1-6 2 1c3 1 4-1 5-2 0 4-2 5-4 5z"/></svg></div>
<div class="slot off"><svg width="16" height="16"><use href="#lnk"/><path fill="#61a942" d="M15 15l-1-6-2 1c-3 1-4-1-5-2 0 4 2 5 4 5z"/></svg></div>
<div class="vsep"></div>
<div class="slot" style="font:400 10.500px Roboto,sans-serif;color:#222">3D</div>
<div class="slot"><svg width="16" height="16"><path fill="#bcc0ad" stroke="#666a58" d="M2.500 3.500h11v9h-11z"/><circle cx="8" cy="8" r="3" fill="#ddd" stroke="#666a58"/><circle cx="11.500" cy="11" r="4" fill="#62c246"/><circle cx="11.500" cy="11" r="1.600" fill="none" stroke="#fff"/></svg></div>
<div class="vsep"></div>
<div class="slot"><svg width="16" height="16"><use href="#selbox"/><path stroke="#1a7d13" stroke-width="2" d="M7 3v5M4.500 5.500h5"/><use href="#cur"/></svg></div>
<div class="slot"><svg width="16" height="16"><use href="#selbox"/><path stroke="#f31e1e" stroke-width="2" d="M4 5.500h5"/><use href="#cur"/></svg></div>
<div class="slot"><svg width="16" height="16"><use href="#selbox"/><path stroke="#1a7d13" stroke-width="2" d="M7 2v5M4.500 4.500h5"/><path stroke="#f31e1e" stroke-width="2" d="M4 9h6"/><use href="#cur"/></svg></div>
<div class="vsep"></div>
<div class="slot"><svg width="16" height="16"><use href="#selbox"/><path fill="#70c043" d="M3 11l4.500-8 4 8z"/><use href="#cur"/></svg></div>
<div class="slot"><svg width="16" height="16"><use href="#selbox"/><path fill="none" stroke="#e98e79" stroke-dasharray="2 1" d="M4 11l4-7 4 7"/><use href="#cur"/></svg></div>
<div class="slot"><svg width="16" height="16"><path fill="#81bd62" stroke="#61794f" d="M2 4l4-1 8 1v7l-7 2-5-3z"/><path fill="#5fb33e" d="M8 5l6-1v6l-6 2z"/><use href="#cur"/></svg></div>
<div class="slot"><svg width="16" height="16"><use href="#net" stroke="#a07d68"/><path fill="#ff3c1c" d="M13 3h2v2h-2zM13 9h2v2h-2zM7 5h2v2H7zM3 10h2v2H3z"/></svg></div>
<div class="slot"><svg width="16" height="16"><use href="#net" stroke="#333"/><path fill="#70c043" d="M4 8l3 1v3l-3-1z"/><use href="#cur"/></svg></div>
<div class="slot"><svg width="16" height="16"><use href="#net" stroke="#333"/><path fill="#ff3c1c" d="M3 6h2v2H3zM7 5h2v2H7zM4 10h2v2H4z"/><use href="#cur"/></svg></div>
<div class="slot off"><svg width="16" height="16"><use href="#selbox"/><path fill="#70c043" d="M7 7h4v4H7z"/><use href="#cur"/></svg></div>
<div class="slot"><svg width="16" height="16"><path fill="#80c75a" d="M3 12l4.500-8 4 8z"/><use href="#cur"/></svg></div>
<div class="slot"><svg width="16" height="16"><path fill="none" stroke="#f1583d" stroke-width="1.300" stroke-dasharray="2 2" d="M3 11l4-7 3 4"/><use href="#cur"/></svg></div>
<div class="slot"><svg width="16" height="16"><circle cx="3" cy="9" r="1" fill="#f1583d"/><text x="6" y="13" font-size="12" font-weight="600" fill="#444">?</text></svg></div>
<div class="slot"><svg width="16" height="16"><path fill="#999" d="M4 4h8v9q-4 2-8 0z"/><ellipse cx="8" cy="4" rx="4.500" ry="1.500" fill="#aaa"/></svg></div>
</div>
<div class="view">
<div class="dlg">
<div class="dlg-h d-flex align-items-center"><span class="d-flex" style="gap:8px;margin-left:8px"><i class="light" style="background:#fc5b54;border-color:#e2463f"></i><i class="light" style="background:#d0d0d0;border-color:#b9b9b9"></i><i class="light" style="background:#27c840;border-color:#1ead2f"></i></span>
<svg width="17" height="12" style="margin-left:127px"><path fill="#bf2433" d="M3.500 .5h4l-2.700 11H.8z"/><path fill="#2d8f4b" d="M8.500 .5h4l-2.700 11h-4z"/><path fill="#155496" d="M13.300 .5h3.700l-2.700 11h-3.700z"/></svg><span style="margin-left:4px;white-space:pre;font-size:12.500px;letter-spacing:.12px">Open File:  (open multiple files with &lt;ctrl&gt; key.)</span></div>
<div class="d-flex align-items-center" style="margin:22px 0 0 47px">
<span style="width:82px;margin-top:-3px">Look in:</span>
<div class="combo bg-white overflow-hidden" style="width:396px;height:22px;margin-right:10px"><span style="margin:-3px 0 0 8px">/Users/magne/docker-share/</span><span class="blue ms-auto" style="margin-right:-1px"><svg width="8" height="13" stroke="#fff"><use href="#ud"/></svg></span></div>
<button class="tool"><svg width="16" height="16"><use href="#arw"/></svg></button>
<button class="tool off"><svg width="16" height="16" viewBox="0 0 16 16"><g transform="rotate(180 8 8)"><use href="#arw" width="16" height="16"/></g></svg></button>
<button class="tool"><svg width="16" height="16" viewBox="0 0 16 16"><g transform="rotate(90 8 8)"><use href="#arw" width="16" height="16"/></g></svg></button>
<button class="tool"><svg width="16" height="16"><path fill="#fce1a0" stroke="#8f6a2b" stroke-width=".8" d="M1.500 4.500l4-1 1 1L12 1l1 .5v10l-7 3.500-4.500-1z"/><path fill="#f0a02b" stroke="#8f6a2b" stroke-width=".8" d="M1.500 14.500L5 7l3-1 1-2 4.500-2-2 9.500-6 3.500z"/><path stroke="#3d8520" stroke-width="2.400" d="M12.500 8.500v6M9.500 11.500h6"/><path stroke="#9ad474" d="M12.500 9.200v4.600M10.200 11.500h4.600"/></svg></button>
</div>
<div class="d-flex" style="margin:13px 0 0 20px">
<div style="width:127px;margin:1px 6px 0 0">
<div class="lst"><div><svg width="16" height="14"><use href="#folder"/></svg>Examples</div><div><svg width="16" height="14"><use href="#folder"/></svg>Home</div><div><svg width="16" height="14"><use href="#folder"/></svg>Desktop</div><div><svg width="16" height="14"><use href="#folder"/></svg>Documents</div><div><svg width="16" height="14"><use href="#folder"/></svg>Downloads</div><div><svg width="16" height="14"><use href="#folder"/></svg>Macintosh HD</div></div>
<div class="d-flex align-items-center" style="height:7px;background:#f9f9f9;width:133px"><i class="light" style="width:6px;height:6px;background:#ccc;border-color:#aaa;margin-left:60px"></i><i class="light" style="width:6px;height:6px;background:#ccc;border-color:#aaa;margin-left:61px"></i></div>
<div class="lst" style="height:156px"><div><svg width="16" height="14"><use href="#folder"/></svg>docker-share</div><div><svg width="16" height="14"><use href="#folder"/></svg>tma632</div></div>
</div>
<div style="width:512px">
<div class="ftab position-relative">
<div class="fr h"><div class="d-flex justify-content-between" style="padding:0 6px 0 4px">Filename<svg width="9" height="9" style="margin-top:3px"><path fill="#6f6f6f" d="M0 8h9L4.500 0z"/></svg></div><span>Type</span><span>Size</span><span>Date Modified</span></div>
<div class="fr"><span class="nm"><svg width="12" height="16"><use href="#doc"/></svg>output.h5</span><span>h5 File</span><span>54…KB</span><span>25/04/17 22:35</span></div>
<div class="fr"><span class="nm"><svg width="12" height="16"><use href="#doc"/></svg>output.pvd</span><span>pvd File</span><span>168…tes</span><span>25/04/17 22:35</span></div>
<div class="fr"><span class="nm"><svg width="12" height="16"><use href="#doc"/></svg>output.xdmf</span><span>xdm…ile</span><span>672…tes</span><span>25/04/17 22:35</span></div>
<div class="fr"><span class="nm"><svg width="12" height="16"><use href="#doc"/></svg>output000000.vtu</span><span>vtu File</span><span>90…KB</span><span>25/04/17 22:35</span></div>
<div class="fr"><span class="nm"><svg width="12" height="16"><use href="#doc"/></svg>solution.h5</span><span>h5 File</span><span>54…KB</span><span>25/04/17 22:27</span></div>
</div>
<div class="d-flex align-items-center" style="margin-top:17px"><span style="width:83px;margin-top:-2px;padding-left:1px">File name:</span><div class="boxin" style="width:338px"></div><button class="blue border-0" style="width:69px;margin-left:14px;border-radius:4px;padding-bottom:5px">OK</button></div>
<div class="d-flex align-items-center" style="margin-top:14px"><span style="width:82px;margin-top:-3px;padding-left:1px;white-space:nowrap">Files of type:</span><div class="combo bg-white overflow-hidden" style="width:339px"><span style="margin:-3px 0 0 8px;white-space:pre;width:312px;overflow:hidden;font-size:12.900px">Supported Files (*.inp  *.cosmo  *.cgns  *.cml  *.csv *.t</span><span class="blue ms-auto" style="margin-right:-1px"><svg width="8" height="13" stroke="#fff"><use href="#ud"/></svg></span></div><button class="combo bg-white justify-content-center p-0" style="width:69px;margin-left:14px;padding-bottom:4px!important">Cancel</button></div>
</div>
</div>
</div>
</div>
</div>
</div>
<script src="https://cdn.jsdelivr.net/npm/bootstrap@5.3.0/dist/js/bootstrap.bundle.min.js"></script>
</body>
</html>
